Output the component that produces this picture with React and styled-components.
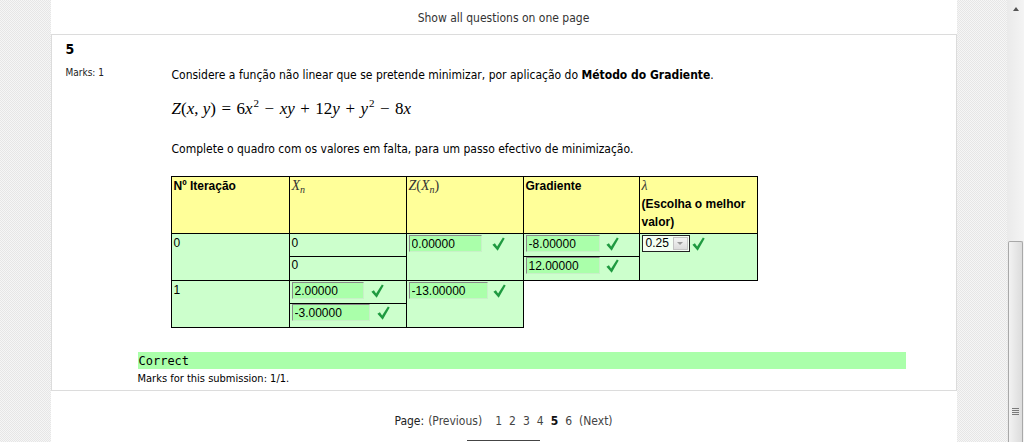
import styled, { createGlobalStyle } from 'styled-components';

const GlobalStyle = createGlobalStyle`
  html, body {
    margin: 0;
    padding: 0;
  }
  body {
    font-family: "DejaVu Sans Condensed", "DejaVu Sans", sans-serif;
    font-size: 12px;
    color: #000;
    overflow: hidden;
  }
`;

const Screen = styled.div`
  display: flex;
  width: 1024px;
  height: 442px;
  overflow: hidden;
`;

const Page = styled.div`
  flex: 1;
  background-color: #efefef;
  background-image: repeating-conic-gradient(#f6f6f6 0 25%, #e6e6e6 0 50%);
  background-size: 2px 2px;
`;

const Column = styled.div`
  width: 906px;
  height: 100%;
  margin: 0 auto;
  background: #fff;
  display: flex;
  flex-direction: column;
`;

const TopLink = styled.div`
  height: 34px;
  line-height: 36px;
  text-align: center;
  color: #333;
`;

const Question = styled.div`
  border: 1px solid #dcdcdc;
  padding: 6px 0 5px 14px;
  display: flex;
  flex-direction: column;
`;

const QHead = styled.div`
  display: flex;
`;

const Info = styled.div`
  width: 106px;
  flex-shrink: 0;
`;

const QNumber = styled.div`
  font-size: 14px;
  font-weight: bold;
  line-height: 16px;
`;

const Marks = styled.div`
  margin-top: 10px;
  font-size: 10px;
  line-height: 12px;
  color: #222;
`;

const Content = styled.div`
  padding-top: 27px;
`;

const Para = styled.p`
  margin: ${(p) => p.$mt || 0}px 0 0;
  line-height: 15px;
  b {
    font-weight: bold;
  }
`;

const Formula = styled.div`
  margin-top: 17px;
  height: 18px;
  line-height: 18px;
  font-family: "Liberation Serif", "DejaVu Serif", serif;
  font-size: 17px;
  white-space: nowrap;
`;

const V = styled.i`
  font-style: italic;
`;

const Op = styled.span`
  padding: 0 ${(p) => p.$pad ?? 5.5}px;
`;

const Sup = styled.sup`
  font-size: 11px;
  line-height: 0;
  vertical-align: 7px;
  margin-left: 1px;
`;

const Sub = styled.sub`
  font-size: 10px;
  line-height: 0;
  vertical-align: -3px;
  font-style: italic;
`;

const Grid = styled.table`
  width: 586px;
  margin-top: 19px;
  margin-left: -1px;
  border-collapse: collapse;
  table-layout: fixed;
  font-family: "Liberation Sans", Arial, sans-serif;
  font-size: 12px;
`;

const HeadCell = styled.th`
  width: ${(p) => p.$w - 5}px;
  height: 56px;
  padding: 0 2px;
  border: 1px solid #000;
  background: #ffff99;
  text-align: left;
  vertical-align: top;
  line-height: 18px;
  font-weight: bold;
`;

const Cell = styled.td`
  height: 44px;
  padding: ${(p) => (p.$split ? '0' : '1px 2px')};
  border: 1px solid #000;
  background: #ccffcc;
  vertical-align: top;
  line-height: 16px;
`;

const SubRow = styled.div`
  height: 22px;
  padding: 1px 2px 0;
  box-sizing: border-box;
  & + & {
    border-top: 1px solid #000;
    padding-top: 0;
  }
`;

const MathHead = styled.span`
  font-family: "Liberation Serif", "DejaVu Serif", serif;
  font-weight: normal;
  font-size: 14px;
  color: #333;
`;

const Answer = styled.div`
  display: flex;
  align-items: center;
  gap: ${(p) => p.$gap ?? 7}px;
`;

const Field = styled.input`
  width: ${(p) => p.$w}px;
  height: 17px;
  box-sizing: border-box;
  padding: 0 2px;
  margin: 0;
  border: 1px solid;
  border-color: #8a8a8a #c8f0c8 #c8f0c8 #8a8a8a;
  background: #aaffaa;
  font-family: "Liberation Sans", Arial, sans-serif;
  font-size: 12px;
  color: #000;
  outline: none;
`;

const Select = styled.div`
  display: flex;
  width: 48px;
  height: 17px;
  box-sizing: border-box;
  border: 1px solid #222;
  background: #f4fff4;
`;

const SelectValue = styled.span`
  flex: 1;
  padding-left: 3px;
  line-height: 15px;
`;

const SelectArrow = styled.span`
  width: 15px;
  margin: 1px;
  background: linear-gradient(#f4f4f4, #dcdcdc);
  border: 1px solid #c4c4c4;
  box-sizing: border-box;
  display: flex;
  align-items: center;
  justify-content: center;
  &::after {
    content: '';
    border-left: 3px solid transparent;
    border-right: 3px solid transparent;
    border-top: 3px solid #999;
  }
`;

const Feedback = styled.div`
  margin: 24px 0 0 72px;
  width: 768px;
`;

const CorrectBar = styled.div`
  height: 17px;
  line-height: 18px;
  padding-left: 1px;
  background: #aaffaa;
  font-family: "DejaVu Sans Mono", "Liberation Mono", monospace;
  font-size: 12px;
`;

const Grade = styled.div`
  margin-top: 4px;
  font-size: 11px;
  line-height: 12px;
`;

const Pager = styled.div`
  margin-top: 23px;
  display: flex;
  justify-content: center;
  align-items: center;
  line-height: 14px;
  color: #444;
`;

const PagerLabel = styled.span`
  color: #222;
  margin-right: 4px;
`;

const PagerLink = styled.span`
  margin-left: ${(p) => p.$ml ?? 7}px;
  font-weight: ${(p) => (p.$current ? 'bold' : 'normal')};
  color: ${(p) => (p.$current ? '#111' : '#444')};
`;

const ButtonTop = styled.div`
  width: 73px;
  height: 10px;
  margin: 12px auto 0;
  border-top: 1px solid #444;
`;

const Scrollbar = styled.div`
  width: 17px;
  flex-shrink: 0;
  background: linear-gradient(90deg, #eaeaea, #f4f4f4);
  display: flex;
  flex-direction: column;
  align-items: center;
`;

const ScrollArrow = styled.div`
  height: 17px;
  width: 17px;
  display: flex;
  align-items: center;
  justify-content: center;
  &::after {
    content: '';
    border-left: 3px solid transparent;
    border-right: 3px solid transparent;
    border-bottom: 4px solid #555;
  }
`;

const Thumb = styled.div`
  margin-top: 224px;
  width: 15px;
  flex: 1;
  box-sizing: border-box;
  border: 1px solid #a8a8a8;
  border-bottom: none;
  border-radius: 2px 2px 0 0;
  background: linear-gradient(90deg, #f2f2f2, #dcdcdc);
  display: flex;
  justify-content: center;
  padding-top: 166px;
`;

const Grip = styled.div`
  width: 7px;
  height: 8px;
  background: repeating-linear-gradient(#7a7a7a 0 1px, transparent 1px 2px);
`;

function Check() {
  return (
    <svg width="13" height="14" viewBox="0 0 13 14">
      <path d="M0.4 7.8 L2.9 6.2 L5.1 9.4 L10.9 0.4 L12.7 1.5 L5.7 13.7 Z" fill="#1f9a40" />
    </svg>
  );
}

function Input({ value, w, gap }) {
  return (
    <Answer $gap={gap}>
      <Field readOnly value={value} $w={w} />
      <Check />
    </Answer>
  );
}

export default function App() {
  return (
    <>
      <GlobalStyle />
      <Screen>
        <Page>
          <Column>
            <TopLink>Show all questions on one page</TopLink>
            <Question>
              <QHead>
                <Info>
                  <QNumber>5</QNumber>
                  <Marks>Marks: 1</Marks>
                </Info>
                <Content>
                  <Para>
                    Considere a função não linear que se pretende minimizar, por aplicação do{' '}
                    <b>Método do Gradiente</b>.
                  </Para>
                  <Formula>
                    <V>Z</V>(<V>x</V>, <V>y</V>)<Op>=</Op>6<V>x</V>
                    <Sup>2</Sup>
                    <Op>−</Op>
                    <V>xy</V>
                    <Op>+</Op>12<V>y</V>
                    <Op>+</Op>
                    <V>y</V>
                    <Sup>2</Sup>
                    <Op>−</Op>8<V>x</V>
                  </Formula>
                  <Para $mt={24}>
                    Complete o quadro com os valores em falta, para um passo efectivo de minimização.
                  </Para>
                  <Grid>
                    <thead>
                      <tr>
                        <HeadCell $w={118}>Nº Iteração</HeadCell>
                        <HeadCell $w={117}>
                          <MathHead>
                            <V>X</V>
                            <Sub>n</Sub>
                          </MathHead>
                        </HeadCell>
                        <HeadCell $w={117}>
                          <MathHead>
                            <V>Z</V>(<V>X</V>
                            <Sub>n</Sub>)
                          </MathHead>
                        </HeadCell>
                        <HeadCell $w={116}>Gradiente</HeadCell>
                        <HeadCell $w={118}>
                          <MathHead>
                            <V>λ</V>
                          </MathHead>
                          <br />
                          (Escolha o melhor valor)
                        </HeadCell>
                      </tr>
                    </thead>
                    <tbody>
                      <tr>
                        <Cell>0</Cell>
                        <Cell $split>
                          <SubRow>0</SubRow>
                          <SubRow>0</SubRow>
                        </Cell>
                        <Cell>
                          <Input value="0.00000" w={73} gap={10} />
                        </Cell>
                        <Cell $split>
                          <SubRow>
                            <Input value="-8.00000" w={74} gap={6} />
                          </SubRow>
                          <SubRow>
                            <Input value="12.00000" w={74} gap={6} />
                          </SubRow>
                        </Cell>
                        <Cell>
                          <Answer $gap={2}>
                            <Select>
                              <SelectValue>0.25</SelectValue>
                              <SelectArrow />
                            </Select>
                            <Check />
                          </Answer>
                        </Cell>
                      </tr>
                      <tr>
                        <Cell>1</Cell>
                        <Cell $split>
                          <SubRow>
                            <Input value="2.00000" w={72} gap={7} />
                          </SubRow>
                          <SubRow>
                            <Input value="-3.00000" w={78} gap={7} />
                          </SubRow>
                        </Cell>
                        <Cell>
                          <Input value="-13.00000" w={79} gap={5} />
                        </Cell>
                      </tr>
                    </tbody>
                  </Grid>
                </Content>
              </QHead>
              <Feedback>
                <CorrectBar>Correct</CorrectBar>
                <Grade>Marks for this submission: 1/1.</Grade>
              </Feedback>
            </Question>
            <Pager>
              <PagerLabel>Page:</PagerLabel>
              <PagerLink $ml={0}>(Previous)</PagerLink>
              <PagerLink $ml={13}>1</PagerLink>
              <PagerLink>2</PagerLink>
              <PagerLink>3</PagerLink>
              <PagerLink>4</PagerLink>
              <PagerLink $current>5</PagerLink>
              <PagerLink>6</PagerLink>
              <PagerLink>(Next)</PagerLink>
            </Pager>
            <ButtonTop />
          </Column>
        </Page>
        <Scrollbar>
          <ScrollArrow />
          <Thumb>
            <Grip />
          </Thumb>
        </Scrollbar>
      </Screen>
    </>
  );
}
